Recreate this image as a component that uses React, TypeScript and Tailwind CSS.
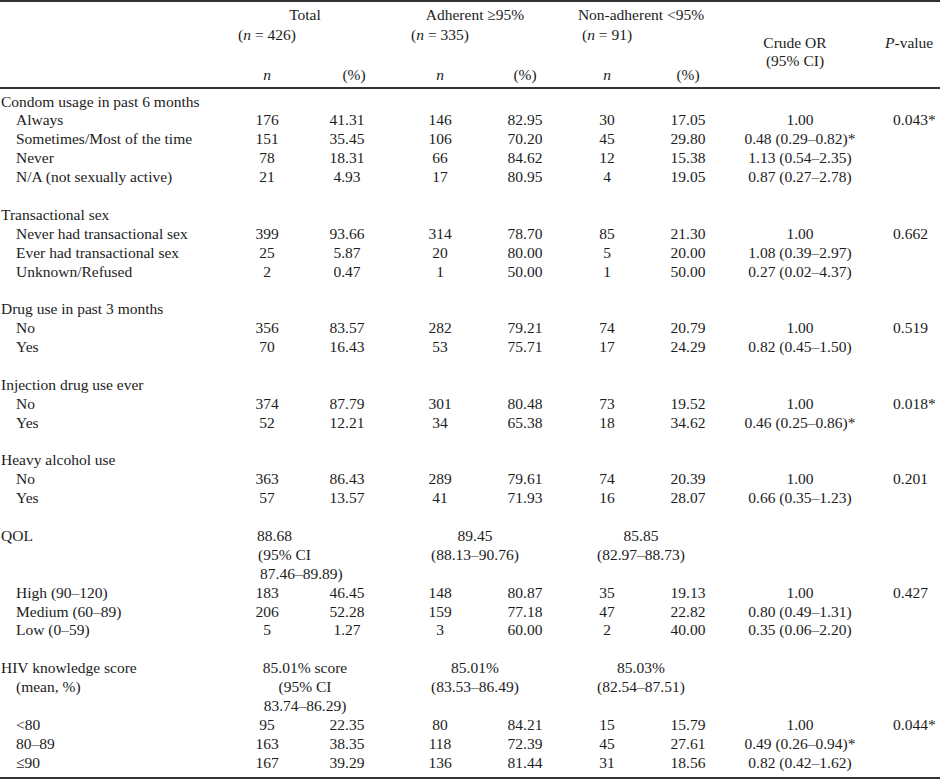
import React from "react";

const G = "grid grid-cols-[230px_74px_86px_100px_70px_94px_68px_156px_1fr]";

type R = [string, string, string, string, string, string, string, string, string];

function DataRow({ r }: { r: R }) {
  return (
    <div className={`${G} h-[18.9px] leading-[18.9px] whitespace-nowrap`}>
      <div className="pl-[16px]">{r[0]}</div>
      <div className="text-center">{r[1]}</div>
      <div className="text-center">{r[2]}</div>
      <div className="text-center">{r[3]}</div>
      <div className="text-center">{r[4]}</div>
      <div className="text-center">{r[5]}</div>
      <div className="text-center">{r[6]}</div>
      <div className="text-center">{r[7]}</div>
      <div className="pl-[15px]">{r[8]}</div>
    </div>
  );
}

function GroupRow({ label }: { label: string }) {
  return (
    <div className={`${G} h-[18.9px] leading-[18.9px] whitespace-nowrap`}>
      <div className="pl-[1px]">{label}</div>
    </div>
  );
}

function Blank() {
  return <div className="h-[18.9px]" />;
}

function MultiRow({
  label,
  total,
  totalCls,
  adh,
  non,
}: {
  label: string;
  total: string;
  totalCls: string;
  adh: string;
  non: string;
}) {
  return (
    <div className={`${G} h-[18.9px] leading-[18.9px] whitespace-nowrap`}>
      <div className={label.startsWith("(") ? "pl-[16px]" : "pl-[1px]"}>{label}</div>
      <div className={`col-span-2 ${totalCls}`}>{total}</div>
      <div className="col-span-2 text-center">{adh}</div>
      <div className="col-span-2 text-center">{non}</div>
    </div>
  );
}

const condom: R[] = [
  ["Always", "176", "41.31", "146", "82.95", "30", "17.05", "1.00", "0.043*"],
  ["Sometimes/Most of the time", "151", "35.45", "106", "70.20", "45", "29.80", "0.48 (0.29–0.82)*", ""],
  ["Never", "78", "18.31", "66", "84.62", "12", "15.38", "1.13 (0.54–2.35)", ""],
  ["N/A (not sexually active)", "21", "4.93", "17", "80.95", "4", "19.05", "0.87 (0.27–2.78)", ""],
];
const trans: R[] = [
  ["Never had transactional sex", "399", "93.66", "314", "78.70", "85", "21.30", "1.00", "0.662"],
  ["Ever had transactional sex", "25", "5.87", "20", "80.00", "5", "20.00", "1.08 (0.39–2.97)", ""],
  ["Unknown/Refused", "2", "0.47", "1", "50.00", "1", "50.00", "0.27 (0.02–4.37)", ""],
];
const drug: R[] = [
  ["No", "356", "83.57", "282", "79.21", "74", "20.79", "1.00", "0.519"],
  ["Yes", "70", "16.43", "53", "75.71", "17", "24.29", "0.82 (0.45–1.50)", ""],
];
const inj: R[] = [
  ["No", "374", "87.79", "301", "80.48", "73", "19.52", "1.00", "0.018*"],
  ["Yes", "52", "12.21", "34", "65.38", "18", "34.62", "0.46 (0.25–0.86)*", ""],
];
const alc: R[] = [
  ["No", "363", "86.43", "289", "79.61", "74", "20.39", "1.00", "0.201"],
  ["Yes", "57", "13.57", "41", "71.93", "16", "28.07", "0.66 (0.35–1.23)", ""],
];
const qol: R[] = [
  ["High (90–120)", "183", "46.45", "148", "80.87", "35", "19.13", "1.00", "0.427"],
  ["Medium (60–89)", "206", "52.28", "159", "77.18", "47", "22.82", "0.80 (0.49–1.31)", ""],
  ["Low (0–59)", "5", "1.27", "3", "60.00", "2", "40.00", "0.35 (0.06–2.20)", ""],
];
const hiv: R[] = [
  ["<80", "95", "22.35", "80", "84.21", "15", "15.79", "1.00", "0.044*"],
  ["80–89", "163", "38.35", "118", "72.39", "45", "27.61", "0.49 (0.26–0.94)*", ""],
  ["≤90", "167", "39.29", "136", "81.44", "31", "18.56", "0.82 (0.42–1.62)", ""],
];

function GroupHead({ title, n, nw, pw, titleCls, pctCls }: { title: string; n: string; nw: string; pw: string; titleCls: string; pctCls: string }) {
  return (
    <div className="col-span-2 pt-[3px] leading-[20px] whitespace-nowrap">
      <div className={`text-center ${titleCls}`}>{title}</div>
      <div className={`${nw} text-center`}>
        (<i>n</i> = {n})
      </div>
      <div className="flex mt-[21px] leading-[18px]">
        <div className={`${nw} text-center italic`}>n</div>
        <div className={`${pw} text-center ${pctCls}`}>(%)</div>
      </div>
    </div>
  );
}

export default function App() {
  return (
    <div
      className="w-[940px] h-[779px] bg-white text-[#1c1c1c] text-[15.5px] overflow-hidden"
      style={{ fontFamily: '"Liberation Serif", "Times New Roman", serif' }}
    >
      <div className={`${G} h-[89px] border-t-2 border-b-2 border-[#333]`}>
        <div />
        <GroupHead title="Total" n="426" nw="w-[74px]" pw="w-[86px]" titleCls="pr-[10px]" pctCls="pl-[14px]" />
        <GroupHead title="Adherent ≥95%" n="335" nw="w-[100px]" pw="w-[70px]" titleCls="" pctCls="" />
        <GroupHead title="Non-adherent <95%" n="91" nw="w-[94px]" pw="w-[68px]" titleCls="" pctCls="" />
        <div className="pt-[32px] leading-[18px] text-center pr-[10px] whitespace-nowrap">
          <div>Crude OR</div>
          <div>(95% CI)</div>
        </div>
        <div className="pt-[32px] pl-[7px] leading-[18px] whitespace-nowrap">
          <i>P</i>-value
        </div>
      </div>

      <div className="pt-[3.5px] pb-[4px] border-b-2 border-[#333]">
        <GroupRow label="Condom usage in past 6 months" />
        {condom.map((r, i) => (
          <DataRow key={"c" + i} r={r} />
        ))}
        <Blank />
        <GroupRow label="Transactional sex" />
        {trans.map((r, i) => (
          <DataRow key={"t" + i} r={r} />
        ))}
        <Blank />
        <GroupRow label="Drug use in past 3 months" />
        {drug.map((r, i) => (
          <DataRow key={"d" + i} r={r} />
        ))}
        <Blank />
        <GroupRow label="Injection drug use ever" />
        {inj.map((r, i) => (
          <DataRow key={"i" + i} r={r} />
        ))}
        <Blank />
        <GroupRow label="Heavy alcohol use" />
        {alc.map((r, i) => (
          <DataRow key={"a" + i} r={r} />
        ))}
        <Blank />
        <MultiRow label="QOL" total="88.68" totalCls="pl-[27px]" adh="89.45" non="85.85" />
        <MultiRow label="" total="(95% CI" totalCls="pl-[28px]" adh="(88.13–90.76)" non="(82.97–88.73)" />
        <MultiRow label="" total="87.46–89.89)" totalCls="pl-[30px]" adh="" non="" />
        {qol.map((r, i) => (
          <DataRow key={"q" + i} r={r} />
        ))}
        <Blank />
        <MultiRow label="HIV knowledge score" total="85.01% score" totalCls="text-center pr-[10px]" adh="85.01%" non="85.03%" />
        <MultiRow label="(mean, %)" total="(95% CI" totalCls="text-center pr-[10px]" adh="(83.53–86.49)" non="(82.54–87.51)" />
        <MultiRow label="" total="83.74–86.29)" totalCls="text-center pr-[10px]" adh="" non="" />
        {hiv.map((r, i) => (
          <DataRow key={"h" + i} r={r} />
        ))}
      </div>
    </div>
  );
}
